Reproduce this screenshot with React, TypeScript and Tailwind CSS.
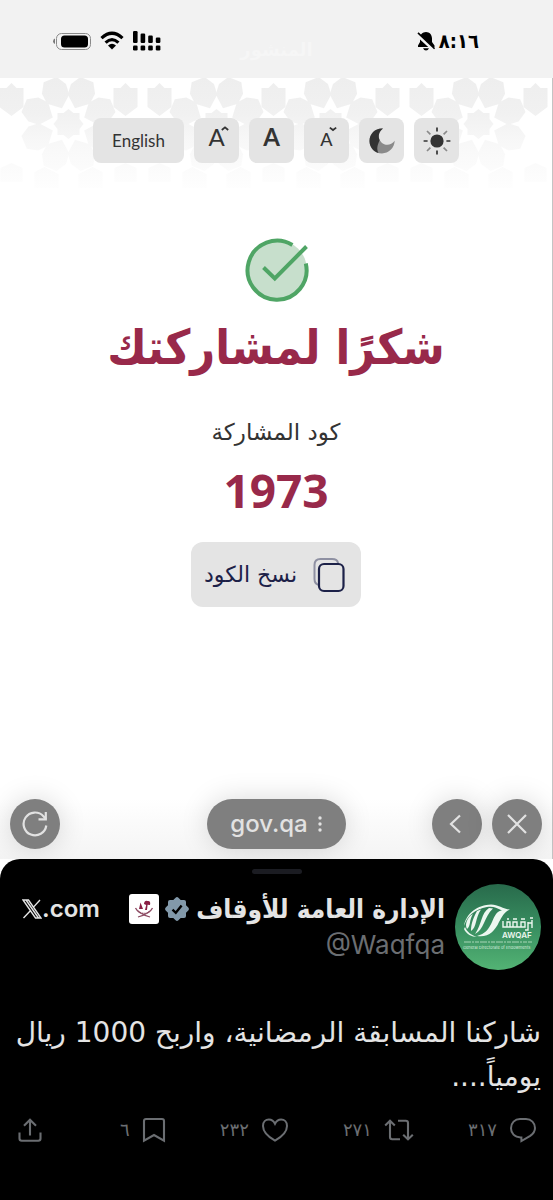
import type { ReactNode } from 'react';

const ARABIC = "font-['DejaVu_Sans',sans-serif]";
const ARABIC_CONDENSED = "font-['DejaVu_Sans_Condensed','DejaVu_Sans',sans-serif]";

const FLOWERS = [69, 217, 331, 479];
const SHIELDS = [12, 126, 160, 274, 388, 422, 536];
const PETAL_ANGLES = [22.5, 67.5, 112.5, 157.5, 202.5, 247.5, 292.5, 337.5];

function Pattern() {
  return (
    <svg className="absolute inset-x-0 top-0 h-[120px] w-full" viewBox="0 0 553 120" preserveAspectRatio="xMidYMin slice" aria-hidden="true">
      <defs>
        <linearGradient id="fade" x1="0" y1="0" x2="0" y2="120" gradientUnits="userSpaceOnUse">
          <stop offset="0" stopColor="#eeeeee" />
          <stop offset="0.3" stopColor="#f1f1f1" />
          <stop offset="0.55" stopColor="#f8f8f8" />
          <stop offset="0.8" stopColor="#fcfcfc" />
          <stop offset="1" stopColor="#ffffff" />
        </linearGradient>
        <mask id="ornament">
          {FLOWERS.map((x) => (
            <g key={x} transform={`translate(${x} 46)`} fill="white">
              {PETAL_ANGLES.map((a) => (
                <path key={a} transform={`rotate(${a})`} d="M0-17 L12-27 L13-38 L7-48 H-7 L-13-38 L-12-27Z" />
              ))}
              <path d="M0-15 L5-11 L11-11 L11-5 L15 0 L11 5 L11 11 L5 11 L0 15 L-5 11 L-11 11 L-11 5 L-15 0 L-11-5 L-11-11 L-5-11Z" />
              <path d="M-34 48 L-24 43 L-10 50 L-10 64 H-34Z M34 48 L24 43 L10 50 L10 64 H34Z" />
            </g>
          ))}
          {SHIELDS.map((x) => (
            <g key={x} transform={`translate(${x} 0)`} fill="white">
              <path d="M-12 10 H-5 L0 5 L5 10 H12 V29 L0 38 L-12 29Z" />
              <path d="M-11 90 L0 85 L11 90 V104 H-11Z" />
            </g>
          ))}
        </mask>
      </defs>
      <rect width="553" height="120" fill="url(#fade)" mask="url(#ornament)" />
    </svg>
  );
}

function StatusBar() {
  return (
    <header className="relative flex h-[78px] items-center justify-between bg-[#f2f2f2] pt-[3px] pr-[74px] pl-[53px] text-black" dir="ltr">
      <div className="flex items-center gap-[9px]">
        <svg width="38" height="20" viewBox="2 0 38 20" aria-hidden="true">
          <path d="M4 7.4 A3 3 0 0 0 4 13Z" fill="#777" />
          <rect x="5.5" y="2.5" width="34" height="16" rx="5" fill="none" stroke="#8a8a8a" />
          <rect x="10" y="4.5" width="27" height="12" rx="3.5" />
        </svg>
        <svg width="24" height="19" viewBox="0 0 24 19" fill="none" stroke="black" strokeWidth="3.2" aria-hidden="true">
          <path d="M1.5 7.2 Q12-2.6 22.5 7.2" />
          <path d="M5.6 11.6 Q12 5.6 18.4 11.6" />
          <path d="M8 14.4 Q12 11 16 14.4 L12 18.4Z" fill="black" stroke="none" />
        </svg>
        <svg width="28" height="20" viewBox="0 0 28 20" aria-hidden="true">
          <rect x="0" y="0" width="4.6" height="12" rx="1.2" />
          <rect x="7.6" y="2.5" width="4.6" height="9.5" rx="1.2" />
          <rect x="15.2" y="4.5" width="4.6" height="7.5" rx="1.2" />
          <rect x="22.8" y="6.5" width="4.6" height="5.5" rx="1.2" />
          <rect x="0" y="14.5" width="4.6" height="5" rx="1.2" />
          <rect x="7.6" y="14.5" width="4.6" height="5" rx="1.2" />
          <rect x="15.2" y="14.5" width="4.6" height="5" rx="1.2" />
          <rect x="22.8" y="14.5" width="4.6" height="5" rx="1.2" />
        </svg>
      </div>
      <p className={`${ARABIC} absolute inset-x-0 top-9 text-center text-lg font-bold text-[#f6f6f6]`} dir="rtl">المنشور</p>
      <div className="flex items-center gap-1">
        <svg width="18" height="20" viewBox="0 0 18 20" aria-hidden="true">
          <path d="M9 1 C12.5 1 15 3.8 15 7.5 V11 L17.5 14.5 V16 H1 V14.5 L3 11 V7.5 C3 3.8 5.5 1 9 1Z" />
          <path d="M6 17.3 H12 Q11 19.6 9 19.6 Q7 19.6 6 17.3Z" />
          <path d="M-.5 3 L17 19" stroke="#f2f2f2" strokeWidth="3.4" />
          <path d="M1 1.8 L17.6 17.6" stroke="black" strokeWidth="1.6" />
        </svg>
        <time className={`${ARABIC_CONDENSED} text-[20px] leading-6 font-bold`}>٨:١٦</time>
      </div>
    </header>
  );
}

function ToolButton({ label, children }: { label: string; children: ReactNode }) {
  return (
    <button type="button" aria-label={label} className="flex h-[45px] w-[45px] items-center justify-center rounded-lg bg-[#e4e4e4] text-[#333]">
      {children}
    </button>
  );
}

function Toolbar() {
  return (
    <nav className="relative flex justify-center gap-[10px] font-['Lato',sans-serif]" dir="ltr">
      <button type="button" className="h-[45px] w-[91px] rounded-lg bg-[#e4e4e4] text-[17px] text-[#333]">English</button>
      <ToolButton label="A+">
        <span className="mb-2 ml-1 text-2xl leading-6">A</span>
        <svg className="-ml-1 mb-6" width="8" height="6" viewBox="0 0 8 6" fill="none" stroke="#333" strokeWidth="1.8" aria-hidden="true"><path d="M.8 4 L4 1.4 L7.2 4" /></svg>
      </ToolButton>
      <ToolButton label="A"><span className="mb-2 text-2xl leading-6 font-bold">A</span></ToolButton>
      <ToolButton label="A-">
        <span className="mb-1 ml-1 text-lg leading-6 font-medium">A</span>
        <svg className="mb-6 -ml-1" width="8" height="6" viewBox="0 0 8 6" fill="none" stroke="#333" strokeWidth="1.8" aria-hidden="true"><path d="M.8 1.6 L4 4 L7.2 1.6" /></svg>
      </ToolButton>
      <ToolButton label="الوضع الداكن">
        <svg width="28" height="28" viewBox="0 0 28 28" aria-hidden="true">
          <path d="M15 1.6 C8 .8 1.5 6.5 1.5 14 C1.5 20.5 6.5 26.4 14 26.4 C20.5 26.4 26.5 21 26.7 13.8 C23 18.8 17 18.7 13.5 15.4 C9.4 11.6 10 5.5 15 1.6Z" fill="#8a8a8a" />
          <path d="M15 1.6 C8 .8 1.5 6.5 1.5 14 C1.5 19.5 5 24.5 10.4 25.9 C8.5 22 9.2 18.6 11.6 13.2 C9.8 9 11 4.4 15 1.6Z" fill="#333" />
        </svg>
      </ToolButton>
      <ToolButton label="الوضع الفاتح">
        <svg width="28" height="28" viewBox="0 0 28 28" fill="none" strokeWidth="1.7" aria-hidden="true">
          <circle cx="14" cy="14" r="6.6" fill="#333" />
          <path d="M14 .6 V4.6 M14 23.4 V27.4 M.6 14 H4.6 M23.4 14 H27.4" stroke="#333" />
          <path d="M4 4 L7.4 7.4 M20.6 20.6 L24 24 M4 24 L7.4 20.6 M20.6 7.4 L24 4" stroke="#8a8a8a" />
        </svg>
      </ToolButton>
    </nav>
  );
}

function RoundButton({ label, children }: { label: string; children: ReactNode }) {
  return (
    <button type="button" aria-label={label} className="flex h-[50px] w-[50px] items-center justify-center rounded-full bg-[#7f7f7f] shadow-[0_0_28px_rgba(0,0,0,0.15)]">
      {children}
    </button>
  );
}

function BrowserBar() {
  return (
    <div className="flex items-center justify-between px-[10px] pb-[10px]" dir="ltr">
      <div className="flex w-[110px]">
        <RoundButton label="تحديث">
          <svg width="26" height="26" viewBox="0 0 26 26" fill="none" stroke="#e2e2e2" strokeWidth="2.2" aria-hidden="true">
            <path d="M24.3 14.5 A11.4 11.4 0 1 1 21.4 5.2 L24 8" />
            <path d="M23.8 1 V8.3 H16.5" />
          </svg>
        </RoundButton>
      </div>
      <button type="button" className="flex h-[50px] w-[139px] items-center justify-center gap-[10px] rounded-full bg-[#7f7f7f] font-['Inter',sans-serif] text-2xl font-medium text-[#e2e2e2] shadow-[0_0_28px_rgba(0,0,0,0.15)]">
        gov.qa
        <svg width="4" height="16" viewBox="0 0 4 16" fill="#e2e2e2" aria-hidden="true">
          <circle cx="2" cy="2" r="1.7" /><circle cx="2" cy="8" r="1.7" /><circle cx="2" cy="14" r="1.7" />
        </svg>
      </button>
      <div className="flex gap-[10px]">
        <RoundButton label="رجوع">
          <svg width="20" height="20" viewBox="0 0 20 20" fill="none" stroke="#e2e2e2" strokeWidth="2.2" aria-hidden="true"><path d="M13 1.5 L4 10 L13 18.5" /></svg>
        </RoundButton>
        <RoundButton label="إغلاق">
          <svg width="20" height="20" viewBox="0 0 20 20" fill="none" stroke="#e2e2e2" strokeWidth="2.2" aria-hidden="true"><path d="M1 1 L19 19 M19 1 L1 19" /></svg>
        </RoundButton>
      </div>
    </div>
  );
}

function Avatar() {
  return (
    <svg className="shrink-0" direction="ltr" width="86" height="86" viewBox="0 0 86 86" role="img" aria-label="أوقاف">
      <defs>
        <linearGradient id="green" x1="0" y1="0" x2="0" y2="1">
          <stop offset="0" stopColor="#286a4b" />
          <stop offset="0.5" stopColor="#388e60" />
          <stop offset="1" stopColor="#53b374" />
        </linearGradient>
      </defs>
      <circle cx="43" cy="43" r="43" fill="url(#green)" />
      <path d="M9 42 C11 29 23 21 36 20.5 C43 20.5 48 25 55 25.5 C49 28 47 33 44 38 C40 47 33 54 22 52 C30 50 34 45 37 38 C40 31 42 27 47 26.5 C41 23 37 22 32 23 C20 25 12 32 9 42Z" fill="#edf7f0" />
      <g fill="#edf7f0">
        <path d="M10 43 C12 48 16 51 22 53 C17 53 11 50 9 45Z" />
        <path d="M15 32 C11 37 10 41 12 45 C16 42 14 36 18 30Z M22 27 C17 36 16 42 16 47 C22 43 20 34 26 25.5Z M34 24 C26 29 27 40 20 50 C29 46 29 33 38 24.5Z" />
      </g>
      <g fill="none" stroke="#edf7f0" strokeWidth="1.4">
        <path d="M48 37 V43 H55 V38 H52 V43 M54 43 H62 V38 H58 V43 M62 43 H70 V38 H66 V43 M70 46 H73 V38 M77 36 V44 M73 39 H77 M52 35 H54 M58 35 H62 M66 35 H70 M75 34 H78" />
      </g>
      <text x="47" y="54" fill="#edf7f0" fontFamily="Inter, sans-serif" fontSize="8" fontWeight="600">AWQAF</text>
      <path d="M9 58 H77" stroke="#a9d6b8" strokeWidth="1" strokeDasharray="7 1 2 1 4 1" />
      <text x="8" y="64.5" fill="#d5ecdd" fontFamily="Inter, sans-serif" fontSize="4">General Directorate of Endowments</text>
    </svg>
  );
}

function Action({ label, count, children }: { label: string; count: string; children: ReactNode }) {
  return (
    <button type="button" aria-label={`${label} ${count}`} className="flex items-center gap-3">
      {children}
      <span className={`${ARABIC} text-[18px] leading-6 text-[#6b6e72]`}>{count}</span>
    </button>
  );
}

function Post() {
  return (
    <article className="rounded-t-[20px] bg-black px-3 pt-[10px] pb-[57px] text-[#e4e4e4]">
      <div className="mx-auto h-[5px] w-[50px] rounded-full bg-[#1c1d23]" />
      <div className="mt-[10px] flex items-start">
        <Avatar />
        <div className="mr-[10px] grow pt-[5px]">
          <div className="flex items-center">
            <h2 className={`${ARABIC_CONDENSED} text-[26px] leading-10 font-bold whitespace-nowrap`}>الإدارة العامة للأوقاف</h2>
            <svg className="mr-[6px] shrink-0" width="26" height="26" viewBox="0 0 26 26" aria-hidden="true">
              <g fill="#8299aa">
                <rect x="4" y="4" width="18" height="18" rx="2" />
                <rect x="4" y="4" width="18" height="18" rx="2" transform="rotate(45 13 13)" />
              </g>
              <path d="M8.5 13.6 L11.8 16.8 L17.6 9.6" fill="none" stroke="black" strokeWidth="2.4" />
            </svg>
            <svg className="mr-[5px] shrink-0" width="30" height="30" viewBox="0 0 30 30" aria-hidden="true">
              <rect width="30" height="30" rx="3" fill="white" />
              <g fill="none" stroke="#8b4860" strokeWidth="1.3">
                <path d="M6.5 14 Q9 19.5 21 23 M23.5 14 Q21 19.5 9 23" />
                <path d="M9 17 Q15 22 21 17" strokeDasharray="1.5 .8" />
              </g>
              <path d="M10 15 L11.5 8.5 L14 15Z M16 16 L17.2 11 L15 10 Q15.5 6 18.5 7 Q22 6.5 21 11 L18.6 10.8 L18 16Z" fill="#8a1f44" />
            </svg>
            <div className="mr-auto flex items-center pl-[10px] font-['Inter',sans-serif] text-2xl leading-10 font-semibold" dir="ltr">
              <svg width="20" height="20" viewBox="0 0 20 20" fill="none" stroke="#e4e4e4" strokeWidth="1.4" aria-label="X">
                <path d="M1 1 H6.5 L19 19 H13.5Z M4 1 L16.5 19 M18 1 L11 8.6 M8.6 11.4 L1.5 19" />
              </svg>
              .com
            </div>
          </div>
          <p className="font-['Inter',sans-serif] text-[26px] leading-8 text-[#6b6e72]"><bdi dir="ltr">@Waqfqa</bdi></p>
        </div>
      </div>
      <p className={`${ARABIC} mt-[41px] text-[28px] leading-[44px]`}>شاركنا المسابقة الرمضانية، واربح 1000 ريال يومياً....</p>
      <div className="mt-[18px] flex items-center justify-between pr-1 pl-[6px]">
        <Action label="رد" count="٣١٧">
          <svg width="28" height="26" viewBox="0 0 28 26" fill="none" stroke="#6b6e72" strokeWidth="2" aria-hidden="true"><path d="M12.4 20.4 H11.6 C5.5 20.4 2 16.2 2 11.2 C2 6 5.8 2 11 2 H17 C22.2 2 26 6 26 11 C26 14.6 24 17 21.2 18.9 L12.4 24Z" /></svg>
        </Action>
        <Action label="إعادة نشر" count="٢٧١">
          <svg width="30" height="26" viewBox="0 0 30 26" fill="none" stroke="#6b6e72" strokeWidth="2.1" aria-hidden="true">
            <path d="M1.2 8.4 L6 3.8 L10.8 8.4 M6 4.5 V20 Q6 22.2 8.2 22.2 H16" />
            <path d="M19.2 17.8 L24 22.4 L28.8 17.8 M24 21.6 V6 Q24 3.8 21.8 3.8 H14" />
          </svg>
        </Action>
        <Action label="إعجاب" count="٢٣٢">
          <svg width="28" height="26" viewBox="0 0 28 26" fill="none" stroke="#6b6e72" strokeWidth="2" aria-hidden="true"><path d="M14 23.6 C6 19 2 13.8 2 8.9 C2 5 4.6 2.6 7.9 2.6 C10.5 2.6 12.7 4.1 14 6.8 C15.3 4.1 17.5 2.6 20.1 2.6 C23.4 2.6 26 5 26 8.9 C26 13.8 22 19 14 23.6Z" /></svg>
        </Action>
        <Action label="حفظ" count="٦">
          <svg width="24" height="26" viewBox="0 0 24 26" fill="none" stroke="#6b6e72" strokeWidth="2.1" aria-hidden="true"><path d="M2 23.6 V4 Q2 2 4 2 H20 Q22 2 22 4 V23.6 L12 18Z" /></svg>
        </Action>
        <button type="button" aria-label="مشاركة" className="flex w-12 justify-end">
          <svg width="24" height="26" viewBox="0 0 24 26" fill="none" stroke="#6b6e72" strokeWidth="2.1" aria-hidden="true"><path d="M12 18.5 V3 M6 8.8 L12 2.8 L18 8.8 M1.5 15.6 V21.5 Q1.5 23.7 3.7 23.7 H20.3 Q22.5 23.7 22.5 21.5 V15.6" /></svg>
        </button>
      </div>
    </article>
  );
}

export default function App() {
  return (
    <div dir="rtl" className="flex min-h-screen flex-col bg-white">
      <StatusBar />
      <main className="relative flex grow flex-col items-center border-r border-[#c4c4c4] pt-10">
        <Pattern />
        <Toolbar />
        <svg className="mt-[74px]" width="66" height="66" viewBox="0 0 66 66" fill="none" stroke="#4fa565" strokeWidth="4" aria-hidden="true">
          <circle cx="34" cy="33" r="30" fill="#c7dfcc" stroke="none" />
          <path d="M49.4 8 A29.5 29.5 0 1 0 62.8 26.5" />
          <path d="M20.5 30.5 L31.8 41.5 L63.5 9.5" />
        </svg>
        <h1 className={`${ARABIC_CONDENSED} mt-3 text-[48px] leading-[64px] font-bold text-[#98294a]`}>شكرًا لمشاركتك</h1>
        <p className={`${ARABIC} mt-[37px] text-[23px] leading-8 text-[#333]`}>كود المشاركة</p>
        <p className="mt-[6px] font-['Noto_Sans',sans-serif] text-[46px] leading-[72px] font-bold text-[#98294a]">1973</p>
        <button type="button" className={`${ARABIC} mt-4 flex h-[65px] items-center gap-4 rounded-xl bg-[#e4e4e4] pr-4 pl-[13px] text-[22px] text-[#1c2148]`}>
          <svg width="32" height="36" viewBox="0 0 32 36" fill="none" aria-hidden="true">
            <path d="M6 28 Q1.5 27 1.5 22 V8 Q1.5 2 7.5 2 H19 Q24.5 2 25 6" stroke="#8e90a2" strokeWidth="2" />
            <rect x="6" y="7" width="24.5" height="27" rx="5" stroke="#1c2148" strokeWidth="2.2" />
          </svg>
          نسخ الكود
        </button>
        <div className="mt-auto w-full bg-linear-to-b from-white to-[#f4f4f4]">
          <BrowserBar />
        </div>
      </main>
      <Post />
    </div>
  );
}
